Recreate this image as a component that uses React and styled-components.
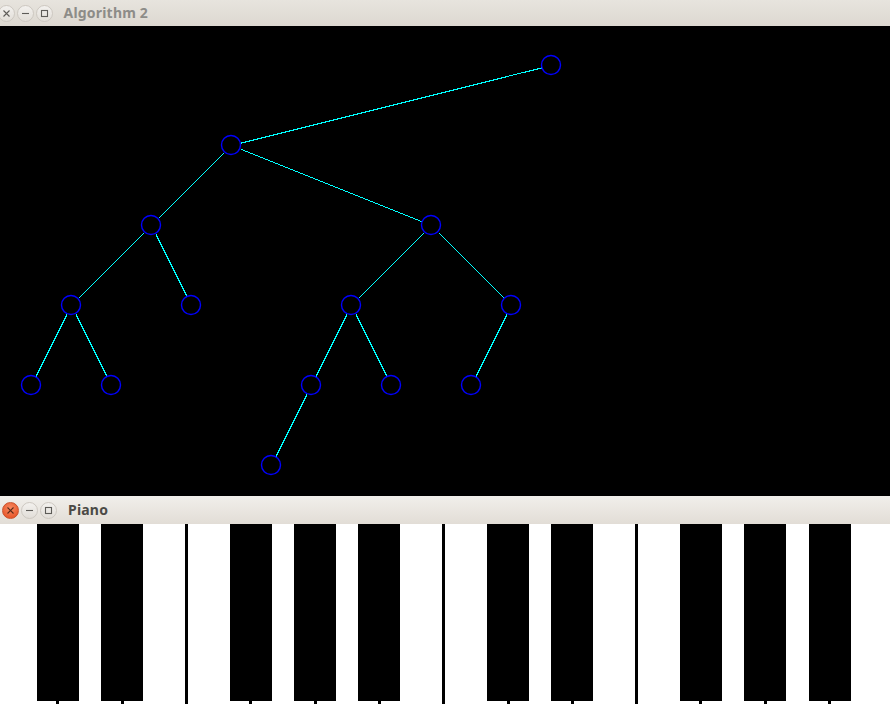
import React from "react";
import styled, { createGlobalStyle, css } from "styled-components";

const Global = createGlobalStyle`
  html, body { margin: 0; padding: 0; background: #000; overflow: hidden; }
  #root { width: 890px; height: 704px; }
`;

const Screen = styled.div`
  width: 890px;
  height: 704px;
  display: flex;
  flex-direction: column;
  overflow: hidden;
`;

const Window = styled.section`
  display: flex;
  flex-direction: column;
  width: 100%;
`;

const TitleBar = styled.header`
  height: ${(p) => p.$height}px;
  display: flex;
  align-items: center;
  gap: 11px;
  padding-left: 2px;
  box-sizing: border-box;
  background: ${(p) =>
    p.$active
      ? "linear-gradient(#f1efeb, #e2ddd6)"
      : "linear-gradient(#e7e4de, #ddd8d1)"};
  font-family: "Noto Sans", "Open Sans", sans-serif;
`;

const ButtonGroup = styled.div`
  display: flex;
  gap: 2px;
  margin-left: ${(p) => p.$shift}px;
`;

const CtlButton = styled.div`
  width: 17px;
  height: 17px;
  border-radius: 50%;
  box-sizing: border-box;
  display: flex;
  align-items: center;
  justify-content: center;
  ${(p) =>
    p.$hot
      ? css`
          background: radial-gradient(circle at 50% 35%, #f68a62, #e9592c 75%);
          border: 1px solid #c9522c;
          color: #5b2a18;
        `
      : css`
          background: linear-gradient(#f3f1ee, #e2ded8);
          border: 1px solid #cdc8c1;
          color: #5e5c58;
        `}
`;

const Title = styled.h1`
  margin: 0;
  font-size: 14px;
  font-weight: 700;
  letter-spacing: 0.2px;
  color: ${(p) => (p.$active ? "#4b4a46" : "#8d8c88")};
  line-height: 1;
`;

const TreeCanvas = styled.div`
  height: 470px;
  background: #000;
  display: flex;
`;

const PianoCanvas = styled.div`
  height: 180px;
  background: #fff;
  display: flex;
`;

const Glyph = ({ kind }) => (
  <svg width="9" height="9" viewBox="0 0 9 9" fill="none" stroke="currentColor" strokeWidth="1.1">
    {kind === "close" && <path d="M1.5 1.5 L7.5 7.5 M7.5 1.5 L1.5 7.5" />}
    {kind === "min" && <path d="M1 4.5 H8" />}
    {kind === "max" && <rect x="1.5" y="1.5" width="6" height="6" />}
  </svg>
);

const Controls = ({ active, shift }) => (
  <ButtonGroup $shift={shift}>
    <CtlButton $hot={active}><Glyph kind="close" /></CtlButton>
    <CtlButton><Glyph kind="min" /></CtlButton>
    <CtlButton><Glyph kind="max" /></CtlButton>
  </ButtonGroup>
);

const nodes = {
  A: [551, 39], B: [231, 119], C: [151, 199], D: [431, 199],
  E: [71, 279], F: [191, 279], G: [351, 279], H: [511, 279],
  I: [31, 359], J: [111, 359], K: [311, 359], L: [391, 359], M: [471, 359],
  N: [271, 439],
};
const edges = [
  ["A", "B"], ["B", "C"], ["B", "D"], ["C", "E"], ["C", "F"], ["E", "I"], ["E", "J"],
  ["D", "G"], ["D", "H"], ["G", "K"], ["G", "L"], ["H", "M"], ["K", "N"],
];

const Tree = () => (
  <svg width="890" height="470" viewBox="0 0 890 470">
    {edges.map(([a, b]) => {
      const [x1, y1] = nodes[a];
      const [x2, y2] = nodes[b];
      const d = Math.hypot(x2 - x1, y2 - y1);
      const ux = (x2 - x1) / d, uy = (y2 - y1) / d;
      return (
        <line key={a + b} shapeRendering="crispEdges"
          x1={x1 + 0.5 + ux * 10} y1={y1 + 0.5 + uy * 10}
          x2={x2 + 0.5 - ux * 10} y2={y2 + 0.5 - uy * 10}
          stroke="#00ffff" strokeWidth="1" />
      );
    })}
    {Object.entries(nodes).map(([k, [x, y]]) => (
      <circle key={k} cx={x} cy={y} r="9.5" fill="none" stroke="#0000ff" strokeWidth="1.4" />
    ))}
  </svg>
);

const KEY_W = 64.3;
const boundaries = Array.from({ length: 14 }, (_, i) => -7.9 + (i + 1) * KEY_W);
const blackAt = [1, 2, 4, 5, 6, 8, 9, 11, 12, 13];

const Piano = () => (
  <svg width="890" height="180" viewBox="0 0 890 180" shapeRendering="crispEdges">
    {boundaries.map((b, i) => (
      <rect key={"d" + i} x={Math.round(b)} y="0" width="3" height="180" fill="#000" />
    ))}
    {blackAt.map((n) => {
      const b = boundaries[n - 1];
      return <rect key={"k" + n} x={Math.round(b - 19.5)} y="0" width="42" height="177" fill="#000" />;
    })}
  </svg>
);

export default function App() {
  return (
    <>
      <Global />
      <Screen>
        <Window>
          <TitleBar $height={26}>
            <Controls shift={-4.5} />
            <Title>Algorithm 2</Title>
          </TitleBar>
          <TreeCanvas><Tree /></TreeCanvas>
        </Window>
        <Window>
          <TitleBar $height={28} $active>
            <Controls active shift={0} />
            <Title $active>Piano</Title>
          </TitleBar>
          <PianoCanvas><Piano /></PianoCanvas>
        </Window>
      </Screen>
    </>
  );
}
